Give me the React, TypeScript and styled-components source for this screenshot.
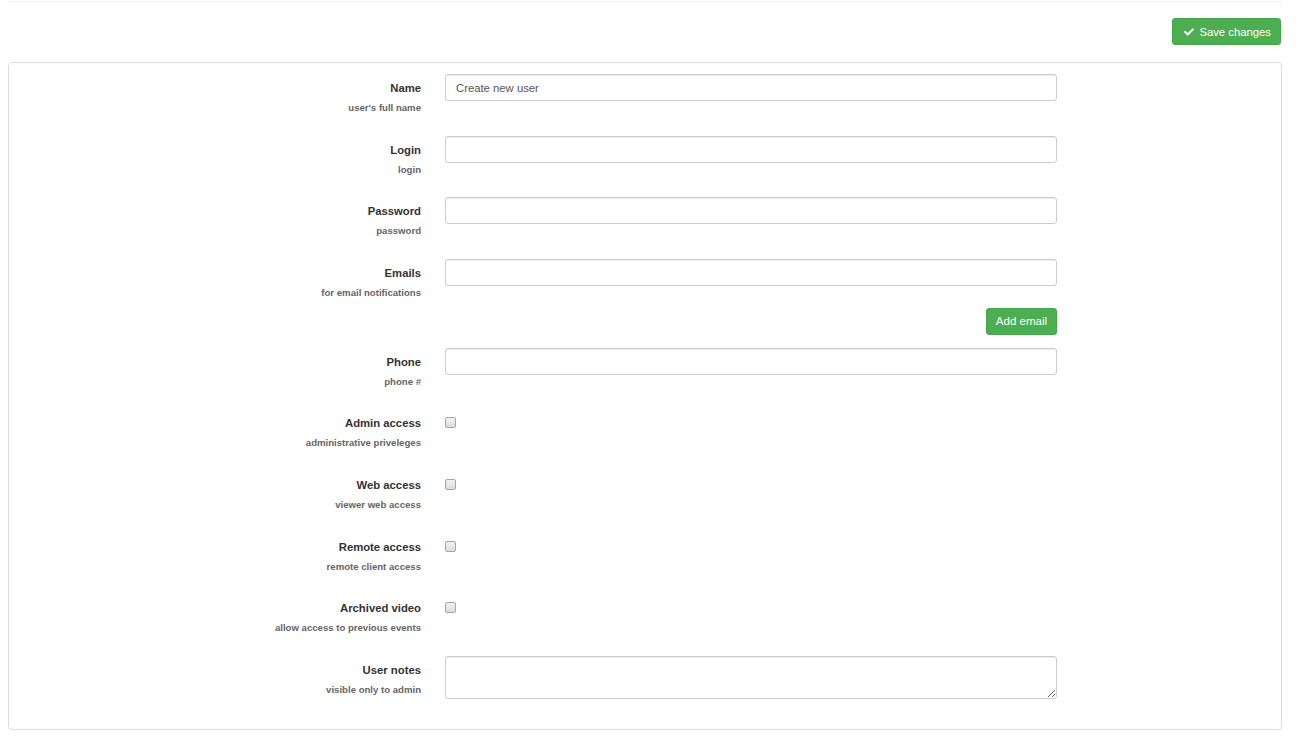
import React from 'react';
import styled, { createGlobalStyle } from 'styled-components';
import { FaCheck } from 'react-icons/fa';

const GlobalStyle = createGlobalStyle`
  html, body {
    margin: 0;
    padding: 0;
    background: #fff;
    font-family: "Liberation Sans", Arial, sans-serif;
    font-size: 11.3px;
    color: #333;
  }
  * { box-sizing: border-box; }
`;

const Page = styled.div`
  padding: 0 8px 0 8px;
  width: 1290px;
`;

const TopRule = styled.div`
  height: 2px;
  border-bottom: 1px solid #eee;
`;

const Toolbar = styled.div`
  display: flex;
  justify-content: flex-end;
  padding: 16px 1px 17px 0;
`;

const Button = styled.button`
  display: inline-flex;
  align-items: center;
  justify-content: center;
  gap: 5px;
  height: 27px;
  padding: 0 9px 0 11px;
  border: 1px solid #45a649;
  border-radius: 3px;
  background: #4cae50;
  color: #fff;
  font-family: "Liberation Sans", Arial, sans-serif;
  font-size: 11.3px;
  cursor: pointer;
  svg { width: 10px; height: 10px; }
`;

const Panel = styled.div`
  border: 1px solid #ddd;
  border-radius: 4px;
  box-shadow: 0 1px 1px rgba(0, 0, 0, 0.05);
  padding: 11px 15px 10px 15px;
`;

const Row = styled.div<{ $tail?: number }>`
  display: grid;
  grid-template-columns: 397px 612px;
  column-gap: 24px;
  min-height: 41.62px;
  margin-bottom: ${(p) => (p.$tail ?? 20)}px;
`;

const LabelCell = styled.div`
  text-align: right;
  padding-top: 7px;
`;

const Label = styled.label`
  display: block;
  font-weight: bold;
  font-size: 11.3px;
  line-height: 14px;
  color: #333;
`;

const Hint = styled.div`
  margin-top: 6px;
  font-weight: bold;
  font-size: 9.6px;
  line-height: 14px;
  color: #666;
`;

const FieldCell = styled.div`
  display: flex;
  flex-direction: column;
  align-items: flex-start;
`;

const TextInput = styled.input`
  width: 100%;
  height: 27px;
  padding: 4px 10px;
  border: 1px solid #ccc;
  border-radius: 3px;
  box-shadow: inset 0 1px 1px rgba(0, 0, 0, 0.075);
  font-family: "Liberation Sans", Arial, sans-serif;
  font-size: 11.3px;
  color: #555;
  outline: none;
`;

const Notes = styled.textarea`
  width: 100%;
  height: 43px;
  padding: 4px 10px;
  border: 1px solid #ccc;
  border-radius: 3px;
  box-shadow: inset 0 1px 1px rgba(0, 0, 0, 0.075);
  font-family: "Liberation Sans", Arial, sans-serif;
  font-size: 11.3px;
  color: #555;
  outline: none;
`;

const Check = styled.input`
  appearance: none;
  width: 11px;
  height: 11px;
  margin: 8px 0 0 0;
  border: 1px solid #a6a6a6;
  border-radius: 2px;
  background: linear-gradient(#f2f2f2, #dcdcdc);
`;

const AddButton = styled(Button)`
  align-self: flex-end;
  margin-top: 22px;
  padding: 0 9px;
  font-size: 11.5px;
`;

type Field = {
  label: string;
  hint: string;
  kind: 'text' | 'check' | 'notes' | 'email';
  value?: string;
};

const fields: Field[] = [
  { label: 'Name', hint: "user's full name", kind: 'text', value: 'Create new user' },
  { label: 'Login', hint: 'login', kind: 'text' },
  { label: 'Password', hint: 'password', kind: 'text' },
  { label: 'Emails', hint: 'for email notifications', kind: 'email' },
  { label: 'Phone', hint: 'phone #', kind: 'text' },
  { label: 'Admin access', hint: 'administrative priveleges', kind: 'check' },
  { label: 'Web access', hint: 'viewer web access', kind: 'check' },
  { label: 'Remote access', hint: 'remote client access', kind: 'check' },
  { label: 'Archived video', hint: 'allow access to previous events', kind: 'check' },
  { label: 'User notes', hint: 'visible only to admin', kind: 'notes' },
];

export default function App() {
  return (
    <Page>
      <GlobalStyle />
      <TopRule />
      <Toolbar>
        <Button>
          <FaCheck />
          Save changes
        </Button>
      </Toolbar>
      <Panel>
        {fields.map((f) => (
          <Row key={f.label} $tail={f.kind === 'email' ? 13 : 20}>
            <LabelCell>
              <Label>{f.label}</Label>
              <Hint>{f.hint}</Hint>
            </LabelCell>
            <FieldCell>
              {f.kind === 'text' && (
                <TextInput
                  type={f.label === 'Password' ? 'password' : 'text'}
                  defaultValue={f.value ?? ''}
                />
              )}
              {f.kind === 'email' && (
                <>
                  <TextInput type="text" defaultValue="" />
                  <AddButton>Add email</AddButton>
                </>
              )}
              {f.kind === 'check' && <Check type="checkbox" />}
              {f.kind === 'notes' && <Notes />}
            </FieldCell>
          </Row>
        ))}
      </Panel>
    </Page>
  );
}
